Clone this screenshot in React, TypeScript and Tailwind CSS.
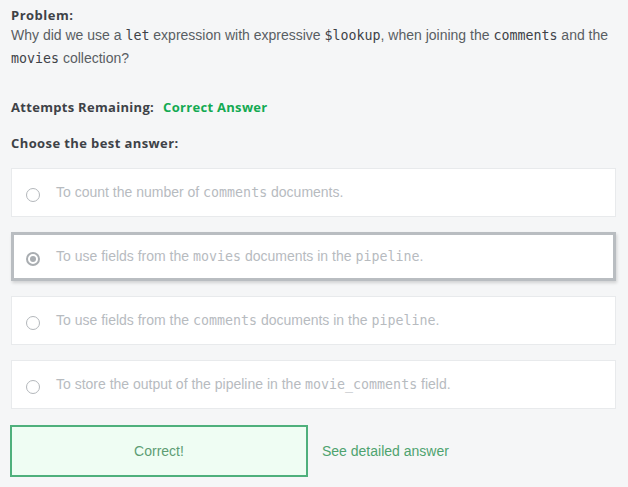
import React from "react";

const mono = "font-['DejaVu_Sans_Mono',monospace]";

function Code({ children, className = "" }: { children: React.ReactNode; className?: string }) {
  return <span className={`${mono} text-[13.3px] ${className}`}>{children}</span>;
}

function Radio({ selected }: { selected?: boolean }) {
  if (selected) {
    return (
      <span className="flex h-[14px] w-[14px] shrink-0 items-center justify-center rounded-full border-[2px] border-[#a9adb1]">
        <span className="block h-[6px] w-[6px] rounded-full bg-[#a9adb1]" />
      </span>
    );
  }
  return <span className="block h-[14px] w-[14px] shrink-0 rounded-full border border-[#b3b7bb]" />;
}

function Option({ selected, children }: { selected?: boolean; children: React.ReactNode }) {
  return (
    <div
      className={
        selected
          ? "flex h-[49px] items-center gap-[16px] border-[3px] border-[#b9bdc1] bg-white pl-[12px] shadow-[1px_2px_3px_rgba(0,0,0,0.15)]"
          : "flex h-[49px] items-center gap-[16px] border border-[#e8eaec] bg-white pl-[14px]"
      }
    >
      <span className="mt-[4px] block">
        <Radio selected={selected} />
      </span>
      <span className="text-[14px] tracking-[0px] text-[#b7bbbf]">{children}</span>
    </div>
  );
}

export default function App() {
  return (
    <div className="min-h-[487px] w-[628px] bg-[#f5f6f7] pl-[11px] pr-[12px] pt-[6px] font-['Liberation_Sans',sans-serif] text-[#595e63]">
      <div className="font-['Open_Sans',sans-serif] text-[13px] font-bold leading-[18px] tracking-[0.5px] text-[#3e4247]">
        Problem:
      </div>
      <p className="text-[14px] leading-[22px]">
        Why did we use a <Code className="text-[#3e4247]">let</Code> expression with expressive{" "}
        <Code className="text-[#3e4247]">$lookup</Code>, when joining the{" "}
        <Code className="text-[#3e4247]">comments</Code> and the <Code className="text-[#3e4247]">movies</Code> collection?
      </p>
      <div className="mt-[27px] flex gap-[9px] font-['Open_Sans',sans-serif] text-[13px] font-bold leading-[20px] tracking-[0.3px]">
        <span className="text-[#3e4247]">Attempts Remaining:</span>
        <span className="text-[#13aa52]">Correct Answer</span>
      </div>
      <div className="mt-[16px] font-['Open_Sans',sans-serif] text-[13px] font-bold leading-[20px] tracking-[0.4px] text-[#3e4247]">
        Choose the best answer:
      </div>
      <div className="mt-[15px] flex flex-col gap-[15px]">
        <Option>
          To count the number of <Code>comments</Code> documents.
        </Option>
        <Option selected>
          To use fields from the <Code>movies</Code> documents in the <Code>pipeline</Code>.
        </Option>
        <Option>
          To use fields from the <Code>comments</Code> documents in the <Code>pipeline</Code>.
        </Option>
        <Option>
          To store the output of the pipeline in the <Code>movie_comments</Code> field.
        </Option>
      </div>
      <div className="mt-[16px] flex items-center">
        <div className="-ml-[1px] flex h-[52px] w-[298px] items-center justify-center border-2 border-[#4fb07c] bg-[#effdf3] text-[14px] text-[#5e9d74]">
          Correct!
        </div>
        <span className="ml-[14px] text-[14px] text-[#4ea36f]">See detailed answer</span>
      </div>
    </div>
  );
}
